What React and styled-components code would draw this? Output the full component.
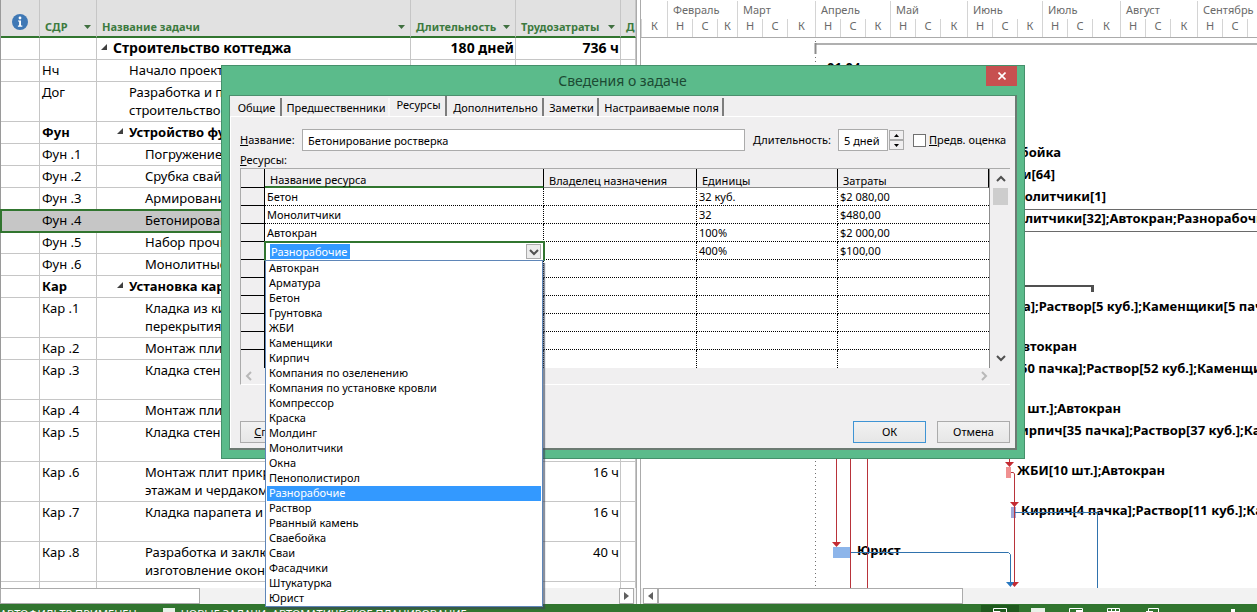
import React from 'react';
import styled, { createGlobalStyle, css } from 'styled-components';

const GlobalStyle = createGlobalStyle`
    * {
        box-sizing: border-box;
    }
    body {
        margin: 0;
        overflow: hidden;
        font-family: 'Noto Sans', 'Open Sans', sans-serif;
        color: #000000;
    }
    button, input {
        font: inherit;
        color: inherit;
        margin: 0;
    }
`;

const Page = styled.div`
    position: relative;
    display: flex;
    flex-direction: column;
    height: 100vh;
    background: #ffffff;
`;

const Workspace = styled.main`
    display: flex;
    flex: 1;
    min-height: 0;
`;

/* ---- task sheet ---- */

const SheetPane = styled.section`
    display: flex;
    flex-direction: column;
    flex: 0 0 637px;
    min-height: 0;
    border-right: 1px solid #ababab;
`;

const SheetBody = styled.div`
    flex: 1;
    min-height: 0;
    overflow: hidden;
`;

const Sheet = styled.table`
    width: 100%;
    table-layout: fixed;
    border-collapse: separate;
    border-spacing: 0;
    border-left: 1px solid #9a9a9a;
`;

const SheetHead = styled.th`
    height: 38px;
    padding: 0 5px 1px 5px;
    vertical-align: bottom;
    text-align: left;
    font-size: 11px;
    line-height: 16px;
    white-space: nowrap;
    color: #3c7a3e;
    background: #e1e1e1;
    border-right: 1px solid #c6c6c6;
    border-bottom: 2px solid #31752f;
`;

const HeadLabel = styled.span`
    display: flex;
    align-items: center;
    justify-content: space-between;
`;

const HeadIcon = styled.span`
    display: flex;
    justify-content: center;
    padding-bottom: 5px;
`;

const SheetRow = styled.tr`
    ${props => props.$selected && css`
        background: #c6c6c6;
        outline: 2px solid #31752f;
        outline-offset: -1px;
    `}
`;

const SheetCell = styled.td`
    height: ${props => (props.$tall ? 40 : 22)}px;
    padding: 1px 1px 1px ${props => 2 + (props.$indent || 0)}px;
    vertical-align: top;
    text-align: ${props => (props.$right ? 'right' : 'left')};
    font-size: ${props => (props.$large ? 14 : 13)}px;
    line-height: 18px;
    font-weight: ${props => (props.$bold ? 'bold' : 'normal')};
    white-space: nowrap;
    overflow: hidden;
    border-right: 1px solid #c6c6c6;
    border-bottom: 1px solid #c6c6c6;
`;

const Collapse = styled.svg`
    width: 6px;
    height: 6px;
    margin-right: 6px;
    vertical-align: 3px;
`;

const ScrollTrack = styled.div`
    display: flex;
    flex: 0 0 16px;
    height: 16px;
    padding-right: 2px;
    background: #f2f2f2;
`;

const ScrollThumb = styled.div`
    width: ${props => props.$width}px;
    background: #ffffff;
    border: 1px solid #ababab;
`;

const ScrollButton = styled.button`
    display: flex;
    align-items: center;
    justify-content: center;
    width: 15px;
    padding: 0;
    margin-left: ${props => (props.$end ? 'auto' : '2px')};
    background: #ffffff;
    border: 1px solid #ababab;
`;

/* ---- gantt chart ---- */

const ChartPane = styled.section`
    display: flex;
    flex-direction: column;
    flex: 1;
    min-width: 0;
    margin-left: 3px;
    border-left: 1px solid #ababab;
`;

const Timescale = styled.div`
    display: flex;
    flex: 0 0 38px;
    overflow: hidden;
    color: #6a6a6a;
    font-size: 11px;
    border-bottom: 1px solid #ababab;
`;

const Month = styled.div`
    flex: 0 0 auto;
    display: flex;
    flex-direction: column;
    padding-top: 1px;
    white-space: nowrap;
`;

const MonthName = styled.div`
    height: 18px;
    padding-left: 5px;
    line-height: 18px;
    border-left: 1px solid ${props => (props.$first ? 'transparent' : '#d4d4d4')};
`;

const Decades = styled.div`
    display: flex;
    flex: 1;
`;

const Decade = styled.div`
    width: ${props => props.$width}px;
    text-align: center;
    line-height: 14px;
    border-left: 1px solid #d4d4d4;
`;

const Chart = styled.svg`
    display: block;
    flex: 1;
    width: 100%;
    min-height: 0;
    font-size: 13px;
    font-weight: bold;
`;

/* ---- status bar ---- */

const StatusBar = styled.footer`
    display: flex;
    flex: 0 0 8px;
    overflow: hidden;
    color: #ffffff;
    background: #31752f;
    font-size: 11px;
    line-height: 20px;
    white-space: nowrap;
`;

const StatusItem = styled.span`
    display: flex;
    align-items: flex-start;
    gap: 6px;
    height: 20px;
    margin-right: 26px;
`;

const StatusIcons = styled.svg`
    width: 276px;
    height: 20px;
    margin-left: auto;
`;

/* ---- dialog ---- */

const Dialog = styled.section`
    position: absolute;
    top: 65px;
    left: 221px;
    width: 804px;
    padding: 0 7px 8px;
    background: #5bbb8b;
    border: 1px solid #45906b;
    font-size: 11px;
    line-height: 16px;
`;

const TitleBar = styled.header`
    display: flex;
    align-items: flex-start;
    height: 29px;
`;

const Title = styled.h1`
    flex: 1;
    margin: 0;
    padding-left: 30px;
    text-align: center;
    font-size: 14px;
    line-height: 30px;
    font-weight: normal;
    color: #1c4a33;
`;

const CloseButton = styled.button`
    display: flex;
    align-items: center;
    justify-content: center;
    width: 31px;
    height: 20px;
    padding: 0;
    border: 0;
    background: #c75050;
`;

const DialogBody = styled.div`
    display: flex;
    flex-direction: column;
    background: #f0eff0;
    border: 1px solid #4c8f6e;
    border-right: 2px solid #6c7a72;
    border-bottom: 2px solid #6c7a72;
`;

const TabList = styled.div`
    display: flex;
    align-items: flex-end;
    height: 21px;
    padding-left: 1px;
    border-bottom: 1px solid #ffffff;
`;

const Tab = styled.button`
    width: ${props => props.$width}px;
    height: ${props => (props.$active ? 20 : 18)}px;
    padding: ${props => (props.$active ? '0 0 3px 2px' : '1px 0 0 2px')};
    text-align: center;
    line-height: 16px;
    white-space: nowrap;
    background: #f0eff0;
    border: 0;
    border-right: 2px solid ${props => (props.$flat ? '#f8f8f8' : '#7d7d7d')};
`;

const TabPanel = styled.div`
    display: flex;
    flex-direction: column;
    padding: 12px 5px 5px 9px;
    border-left: 1px solid #ffffff;
`;

const FormRow = styled.div`
    display: flex;
    align-items: center;
    height: 22px;
`;

const Label = styled.label`
    width: ${props => props.$width}px;
    white-space: nowrap;
`;

const GridLabel = styled.div`
    line-height: 17px;
    white-space: nowrap;
`;

const TextBox = styled.input`
    height: 22px;
    padding: 0 5px;
    background: #ffffff;
    border: 1px solid #ababab;
    border-radius: 0;
    ${props => (props.$width ? `width: ${props.$width}px;` : 'flex: 1; min-width: 0; margin-right: 8px;')}
`;

const Spinner = styled.div`
    display: flex;
    flex-direction: column;
    margin: 0 9px 0 1px;
`;

const SpinButton = styled.button`
    display: flex;
    align-items: center;
    justify-content: center;
    width: 15px;
    height: 10px;
    padding: 0;
    background: #f0eff0;
    border: 1px solid #ababab;
`;

const CheckBox = styled.input`
    appearance: none;
    width: 13px;
    height: 13px;
    margin: 0 3px 0 0;
    background: #ffffff;
    border: 1px solid #707070;
`;

const GridFrame = styled.div`
    display: grid;
    grid-template-columns: 1fr 20px;
    border-top: 1px solid #ababab;
    border-left: 1px solid #ababab;
    border-bottom: 1px solid #ffffff;
`;

const ResourceGrid = styled.table`
    width: 100%;
    table-layout: fixed;
    border-collapse: separate;
    border-spacing: 0;
    background: #ffffff;
    border-right: 1px solid #8c8c8c;
`;

const ResourceHead = styled.th`
    height: 19px;
    padding: 4px 0 0 5px;
    text-align: left;
    font-weight: normal;
    line-height: 13px;
    white-space: nowrap;
    background: #f0eff0;
    border-right: 1px solid #000000;
    border-bottom: ${props => (props.$current ? '2px solid #31752f' : '1px solid #8c8c8c')};

    &:first-child {
        border-bottom-color: #000000;
    }
`;

const ResourceCell = styled.td`
    position: relative;
    height: 18px;
    padding: 0 0 0 2px;
    line-height: 16px;
    white-space: nowrap;
    border-right: 1px dotted #000000;
    border-bottom: 1px dotted #000000;

    &:last-child {
        border-right: 0;
    }
    tr:last-child > & {
        border-bottom: 0;
    }
`;

const RowMarker = styled.td`
    padding: 0;
    background: #f0eff0;
    border-right: 1px solid #000000;
    border-bottom: 1px solid #000000;

    tr:last-child > & {
        border-bottom: 0;
    }
`;

const VerticalScroll = styled.div`
    display: flex;
    flex-direction: column;
    align-items: center;
    width: 15px;
    margin-left: 3px;
    padding: 5px 0;
`;

const VerticalThumb = styled.div`
    width: 15px;
    height: 17px;
    margin: 4px 0 auto;
    background: #cdcdcd;
`;

const HorizontalScroll = styled.div`
    display: flex;
    align-items: center;
    justify-content: space-between;
    height: 16px;
    padding: 0 1px 0 3px;
`;

const ArrowButton = styled.button`
    display: flex;
    padding: 0;
    border: 0;
    background: transparent;
`;

const ComboField = styled.div`
    position: absolute;
    z-index: 1;
    top: -1px;
    left: -1px;
    right: -2px;
    display: flex;
    align-items: center;
    height: 20px;
    padding: 0 2px 0 4px;
    background: #ffffff;
    border: 2px solid #31752f;
    border-bottom: 1px solid #5f86b8;
`;

const ComboInput = styled.input`
    width: 80px;
    height: 15px;
    padding: 1px 0 0 1px;
    border: 0;
    color: #ffffff;
    background: #3399ff;
`;

const ComboButton = styled.button`
    display: flex;
    align-items: center;
    justify-content: center;
    width: 15px;
    height: 15px;
    margin-left: auto;
    padding: 0;
    background: #ececec;
    border: 1px solid #ababab;
`;

const Options = styled.ul`
    position: absolute;
    z-index: 2;
    top: 19px;
    left: 0;
    right: 0;
    margin: 0;
    padding: 0 1px;
    list-style: none;
    background: #ffffff;
    border: 1px solid #5f86b8;
    border-top: 0;
    box-shadow: 2px 2px 1px rgba(60, 70, 90, 0.6);
`;

const Option = styled.li`
    height: 15px;
    padding-left: 2px;
    line-height: 14px;
    ${props => props.$selected && css`
        color: #ffffff;
        background: #3399ff;
    `}
`;

const Actions = styled.div`
    display: flex;
    gap: 11px;
    margin-top: 36px;
`;

const ActionButton = styled.button`
    width: 73px;
    height: 22px;
    padding: 0;
    background: linear-gradient(#f2f2f2, #e6e6e6);
    border: 1px solid #ababab;

    ${props => props.$default && css`
        margin-left: auto;
        border-color: #3f94d4;
    `}
`;

const tasks = [
    { code: '', name: ['Строительство коттеджа'], indent: 2, root: true, summary: true, duration: '180 дней', work: '736 ч' },
    { code: 'Нч', name: ['Начало проекта'], indent: 30 },
    { code: 'Дог', name: ['Разработка и подписание', 'строительство'], indent: 30 },
    { code: 'Фун', name: ['Устройство фундамента'], indent: 18, summary: true },
    { code: 'Фун .1', name: ['Погружение свай'], indent: 46 },
    { code: 'Фун .2', name: ['Срубка свай'], indent: 46 },
    { code: 'Фун .3', name: ['Армирование'], indent: 46 },
    { code: 'Фун .4', name: ['Бетонирование ростверка'], indent: 46, selected: true },
    { code: 'Фун .5', name: ['Набор прочности'], indent: 46 },
    { code: 'Фун .6', name: ['Монолитные'], indent: 46 },
    { code: 'Кар', name: ['Установка каркаса'], indent: 18, summary: true },
    { code: 'Кар .1', name: ['Кладка из кирпича', 'перекрытия'], indent: 46 },
    { code: 'Кар .2', name: ['Монтаж плит'], indent: 46 },
    { code: 'Кар .3', name: ['Кладка стен'], indent: 46, tall: true },
    { code: 'Кар .4', name: ['Монтаж плит'], indent: 46 },
    { code: 'Кар .5', name: ['Кладка стен'], indent: 46, tall: true },
    { code: 'Кар .6', name: ['Монтаж плит прикрытия', 'этажам и чердаком'], indent: 46, work: '16 ч' },
    { code: 'Кар .7', name: ['Кладка парапета и'], indent: 46, tall: true, work: '16 ч' },
    { code: 'Кар .8', name: ['Разработка и заключение', 'изготовление окон'], indent: 46, work: '40 ч' },
    { code: '', name: [''] }
];

const months = [
    { name: '', decades: [['К', 26]] },
    { name: 'Февраль', decades: [['Н', 25], ['С', 25], ['К', 20]] },
    { name: 'Март', decades: [['Н', 25], ['С', 25], ['К', 28]] },
    { name: 'Апрель', decades: [['Н', 25], ['С', 25], ['К', 25]] },
    { name: 'Май', decades: [['Н', 25], ['С', 25], ['К', 27]] },
    { name: 'Июнь', decades: [['Н', 25], ['С', 25], ['К', 25]] },
    { name: 'Июль', decades: [['Н', 25], ['С', 25], ['К', 28]] },
    { name: 'Август', decades: [['Н', 25], ['С', 25], ['К', 27]] },
    { name: 'Сентябрь', decades: [['Н', 25], ['С', 25], ['', 25]] }
];

const chartLabels = [
    { x: 186, y: 34, text: '01.04' },
    { x: 420, y: 119, text: 'бойка', end: true },
    { x: 414, y: 141, text: 'и[64]', end: true },
    { x: 465, y: 163, text: 'нолитчики[1]', end: true },
    { x: 384, y: 185, text: 'литчики[32];Автокран;Разнорабочие' },
    { x: 382, y: 273, text: 'а];Раствор[5 куб.];Каменщики[5 пачка]' },
    { x: 436, y: 313, text: 'втокран', end: true },
    { x: 379, y: 335, text: '50 пачка];Раствор[52 куб.];Каменщики' },
    { x: 480, y: 375, text: '0 шт.];Автокран', end: true },
    { x: 379, y: 397, text: 'ирпич[35 пачка];Раствор[37 куб.];Каменщики' },
    { x: 376, y: 437, text: 'ЖБИ[10 шт.];Автокран' },
    { x: 380, y: 477, text: 'Кирпич[4 пачка];Раствор[11 куб.];Каменщики' },
    { x: 216, y: 517, text: 'Юрист' }
];

const tabs = [
    { name: 'Общие', width: 51 },
    { name: 'Предшественники', width: 108, flat: true },
    { name: 'Ресурсы', width: 57, active: true },
    { name: 'Дополнительно', width: 97 },
    { name: 'Заметки', width: 55 },
    { name: 'Настраиваемые поля', width: 125 }
];

const assignments = [
    ['Бетон', '32 куб.', '$2 080,00'],
    ['Монолитчики', '32', '$480,00'],
    ['Автокран', '100%', '$2 000,00'],
    ['Разнорабочие', '400%', '$100,00'],
    ['', '', ''],
    ['', '', ''],
    ['', '', ''],
    ['', '', ''],
    ['', '', ''],
    ['', '', '']
];

const resources = [
    'Автокран', 'Арматура', 'Бетон', 'Грунтовка', 'ЖБИ', 'Каменщики', 'Кирпич',
    'Компания по озеленению', 'Компания по установке кровли', 'Компрессор', 'Краска',
    'Молдинг', 'Монолитчики', 'Окна', 'Пенополистирол', 'Разнорабочие', 'Раствор',
    'Рванный камень', 'Сваебойка', 'Сваи', 'Фасадчики', 'Штукатурка', 'Юрист'
];

const chevrons = {
    up: 'M1 7 L5 3 L9 7',
    down: 'M1 3 L5 7 L9 3',
    left: 'M7 1 L3 5 L7 9',
    right: 'M3 1 L7 5 L3 9'
};

const Chevron = ({ to, color = '#505050' }) => (
    <svg width="10" height="10" viewBox="0 0 10 10">
        <path d={chevrons[to]} fill="none" stroke={color} strokeWidth="2"/>
    </svg>
);

const SortArrow = () => (
    <svg width="7" height="4" viewBox="0 0 7 4">
        <path d="M0 0 H7 L3.5 4 Z" fill="#3f6f3f"/>
    </svg>
);

const InfoIcon = () => (
    <svg width="16" height="16" viewBox="0 0 16 16">
        <circle cx="8" cy="8" r="8" fill="#3f78b5"/>
        <circle cx="8" cy="4" r="1.4" fill="#ffffff"/>
        <path d="M6 6.5 H9 V11.5 H10.3 V12.8 H5.9 V11.5 H7.1 V7.6 H6 Z" fill="#ffffff"/>
    </svg>
);

const headings = ['СДР', 'Название задачи', 'Длительность', 'Трудозатраты'];

const TaskSheet = () => (
    <SheetPane>
        <SheetBody>
            <Sheet>
                <colgroup>
                    <col width="39"/>
                    <col width="57"/>
                    <col/>
                    <col width="105"/>
                    <col width="105"/>
                    <col width="15"/>
                </colgroup>
                <thead>
                    <tr>
                        <SheetHead><HeadIcon><InfoIcon/></HeadIcon></SheetHead>
                        {headings.map(name => (
                            <SheetHead key={name}><HeadLabel>{name}<SortArrow/></HeadLabel></SheetHead>
                        ))}
                        <SheetHead>Д</SheetHead>
                    </tr>
                </thead>
                <tbody>
                    {tasks.map((task, i) => {
                        const tall = task.tall || task.name.length > 1;
                        return (
                            <SheetRow key={i} $selected={task.selected}>
                                <SheetCell $tall={tall}/>
                                <SheetCell $bold={task.summary}>{task.code}</SheetCell>
                                <SheetCell $bold={task.summary} $large={task.root} $indent={task.indent}>
                                    {task.summary && (
                                        <Collapse viewBox="0 0 6 6"><path d="M6 0 V6 H0 Z" fill="#404040"/></Collapse>
                                    )}
                                    {task.name.map((line, n) => <React.Fragment key={n}>{n > 0 && <br/>}{line}</React.Fragment>)}
                                </SheetCell>
                                <SheetCell $bold={task.summary} $large={task.root} $right>{task.duration}</SheetCell>
                                <SheetCell $bold={task.summary} $large={task.root} $right>{task.work}</SheetCell>
                                <SheetCell/>
                            </SheetRow>
                        );
                    })}
                </tbody>
            </Sheet>
        </SheetBody>
        <ScrollTrack>
            <ScrollThumb $width={200}/>
            <ScrollButton $end aria-label="Вправо">
                <svg width="5" height="8" viewBox="0 0 5 8"><path d="M0 0 L5 4 L0 8 Z" fill="#606060"/></svg>
            </ScrollButton>
        </ScrollTrack>
    </SheetPane>
);

const GanttChart = () => (
    <ChartPane>
        <Timescale>
            {months.map((month, i) => (
                <Month key={i}>
                    <MonthName $first={i === 0}>{month.name}</MonthName>
                    <Decades>
                        {month.decades.map(([letter, width], n) => <Decade key={n} $width={width}>{letter}</Decade>)}
                    </Decades>
                </Month>
            ))}
        </Timescale>
        <Chart>
            {/* project summary */}
            <path d="M174.5 3 V550" stroke="#707070" strokeDasharray="1 3"/>
            <path d="M175 6 H2000" stroke="#b0b0b0" strokeWidth="2"/>
            <path d="M174.5 5 V16" stroke="#8c8c8c" strokeWidth="2"/>
            {/* selected row */}
            <path d="M380 171.5 H2000 M380 193.5 H2000" stroke="#6a6a6a"/>
            {/* phase summary */}
            <path d="M380 248 H451" fill="none" stroke="#505050" strokeWidth="2"/>
            <path d="M451.5 247 V254" stroke="#505050" strokeWidth="3"/>
            {chartLabels.map(label => (
                <text key={label.text} x={label.x} y={label.y} textAnchor={label.end ? 'end' : 'start'}>{label.text}</text>
            ))}
            {/* task bars */}
            <rect x="192" y="509" width="18" height="11" fill="#8db5ea"/>
            <rect x="365" y="429" width="5" height="11" fill="#f09090"/>
            <rect x="370" y="469" width="5" height="11" fill="#9fa8d8"/>
            {/* links */}
            <g fill="none" stroke="#b8333a">
                <path d="M195.5 410 V505"/>
                <path d="M209.5 410 V550"/>
                <path d="M226.5 410 V550"/>
                <path d="M368.5 410 V424"/>
                <path d="M370 434.5 H372.5 L373.5 436 V546"/>
            </g>
            <g fill="none" stroke="#2f72ad">
                <path d="M210 514.5 H367.5 L369.5 516.5 V546"/>
                <path d="M374 474.5 H456.5 V550"/>
            </g>
            <g fill="#c42b32">
                <path d="M191 504 H200 L195.5 509 Z"/>
                <path d="M364 424 H373 L368.5 429 Z"/>
                <path d="M369 464 H378 L373.5 469 Z"/>
                <path d="M369 544 H378 L373.5 549 Z"/>
            </g>
            <path d="M365 544 H373 L369.5 549 Z" fill="#2878c0"/>
        </Chart>
        <ScrollTrack>
            <ScrollButton aria-label="Влево">
                <svg width="5" height="8" viewBox="0 0 5 8"><path d="M5 0 L0 4 L5 8 Z" fill="#606060"/></svg>
            </ScrollButton>
            <ScrollThumb $width={305}/>
        </ScrollTrack>
    </ChartPane>
);

const ResourceCombo = () => (
    <>
        <ComboField>
            <ComboInput aria-label="Название ресурса" defaultValue="Разнорабочие"/>
            <ComboButton aria-label="Список"><Chevron to="down"/></ComboButton>
        </ComboField>
        <Options role="listbox">
            {resources.map(name => (
                <Option key={name} role="option" aria-selected={name === 'Разнорабочие'} $selected={name === 'Разнорабочие'}>{name}</Option>
            ))}
        </Options>
    </>
);

const TaskDialog = () => (
    <Dialog role="dialog" aria-labelledby="dialog-title">
        <TitleBar>
            <Title id="dialog-title">Сведения о задаче</Title>
            <CloseButton aria-label="Закрыть">
                <svg width="8" height="8" viewBox="0 0 8 8"><path d="M0.5 0.5 L7.5 7.5 M7.5 0.5 L0.5 7.5" stroke="#ffffff" strokeWidth="1.6"/></svg>
            </CloseButton>
        </TitleBar>
        <DialogBody>
            <TabList role="tablist">
                {tabs.map(tab => (
                    <Tab key={tab.name} role="tab" aria-selected={!!tab.active} $width={tab.width} $active={tab.active} $flat={tab.flat}>{tab.name}</Tab>
                ))}
            </TabList>
            <TabPanel role="tabpanel">
                <FormRow>
                    <Label htmlFor="task-name" $width={62}><u>Н</u>азвание:</Label>
                    <TextBox id="task-name" defaultValue="Бетонирование ростверка"/>
                    <Label htmlFor="task-duration" $width={85}><u>Д</u>лительность:</Label>
                    <TextBox id="task-duration" $width={50} defaultValue="5 дней"/>
                    <Spinner>
                        <SpinButton aria-label="Больше"><svg width="5" height="3" viewBox="0 0 5 3"><path d="M0 3 L2.5 0 L5 3 Z"/></svg></SpinButton>
                        <SpinButton aria-label="Меньше"><svg width="5" height="3" viewBox="0 0 5 3"><path d="M0 0 L2.5 3 L5 0 Z"/></svg></SpinButton>
                    </Spinner>
                    <CheckBox id="estimated" type="checkbox"/>
                    <Label htmlFor="estimated" $width={81}><u>П</u>редв. оценка</Label>
                </FormRow>
                <GridLabel id="resources-label"><u>Р</u>есурсы:</GridLabel>
                <GridFrame>
                    <ResourceGrid aria-labelledby="resources-label">
                        <colgroup>
                            <col width="24"/>
                            <col width="279"/>
                            <col width="153"/>
                            <col width="141"/>
                            <col/>
                        </colgroup>
                        <thead>
                            <tr>
                                <ResourceHead/>
                                <ResourceHead $current>Название ресурса</ResourceHead>
                                <ResourceHead>Владелец назначения</ResourceHead>
                                <ResourceHead>Единицы</ResourceHead>
                                <ResourceHead>Затраты</ResourceHead>
                            </tr>
                        </thead>
                        <tbody>
                            {assignments.map(([name, units, cost], i) => (
                                <tr key={i}>
                                    <RowMarker/>
                                    <ResourceCell>{i === 3 ? <ResourceCombo/> : name}</ResourceCell>
                                    <ResourceCell/>
                                    <ResourceCell>{units}</ResourceCell>
                                    <ResourceCell>{cost}</ResourceCell>
                                </tr>
                            ))}
                        </tbody>
                    </ResourceGrid>
                    <VerticalScroll>
                        <ArrowButton aria-label="Вверх"><Chevron to="up"/></ArrowButton>
                        <VerticalThumb/>
                        <ArrowButton aria-label="Вниз"><Chevron to="down"/></ArrowButton>
                    </VerticalScroll>
                    <HorizontalScroll>
                        <ArrowButton aria-label="Влево"><Chevron to="left" color="#b8b8b8"/></ArrowButton>
                        <ArrowButton aria-label="Вправо"><Chevron to="right" color="#b8b8b8"/></ArrowButton>
                    </HorizontalScroll>
                </GridFrame>
                <Actions>
                    <ActionButton><u>С</u>правка</ActionButton>
                    <ActionButton $default>ОК</ActionButton>
                    <ActionButton>Отмена</ActionButton>
                </Actions>
            </TabPanel>
        </DialogBody>
    </Dialog>
);

const App = () => (
    <Page>
        <GlobalStyle/>
        <Workspace>
            <TaskSheet/>
            <GanttChart/>
        </Workspace>
        <StatusBar>
            <StatusItem>АВТОФИЛЬТР ПРИМЕНЕН</StatusItem>
            <StatusItem>
                <svg width="12" height="20" viewBox="0 0 12 20"><rect y="4" width="12" height="12" fill="#e8f2e8"/></svg>
                НОВЫЕ ЗАДАЧИ: АВТОМАТИЧЕСКОЕ ПЛАНИРОВАНИЕ
            </StatusItem>
            <StatusIcons viewBox="0 0 276 20">
                <rect width="38" height="20" y="1" fill="#1f5a1e"/>
                <g fill="none" stroke="#ffffff">
                    <path d="M12.5 18 V4.5 H25.5 V18 M12 7.5 H19 M19 7.5 V10"/>
                    <path d="M88.5 18 V4.5 H101.5 V18"/>
                    <path d="M126.5 18 V4.5 H138.5 V18 M130.5 4 V18 M134.5 4 V18 M126 7.5 H139"/>
                    <path d="M167.5 18 V4.5 H177.5 V18 M165 7.5 H172"/>
                </g>
                <rect x="50" y="4" width="14" height="14" fill="#e8f2e8"/>
                <rect x="95" y="6" width="6" height="12" fill="#ffffff"/>
                <rect x="250" y="5" width="4" height="12" fill="#ffffff"/>
            </StatusIcons>
        </StatusBar>
        <TaskDialog/>
    </Page>
);

export default App;
